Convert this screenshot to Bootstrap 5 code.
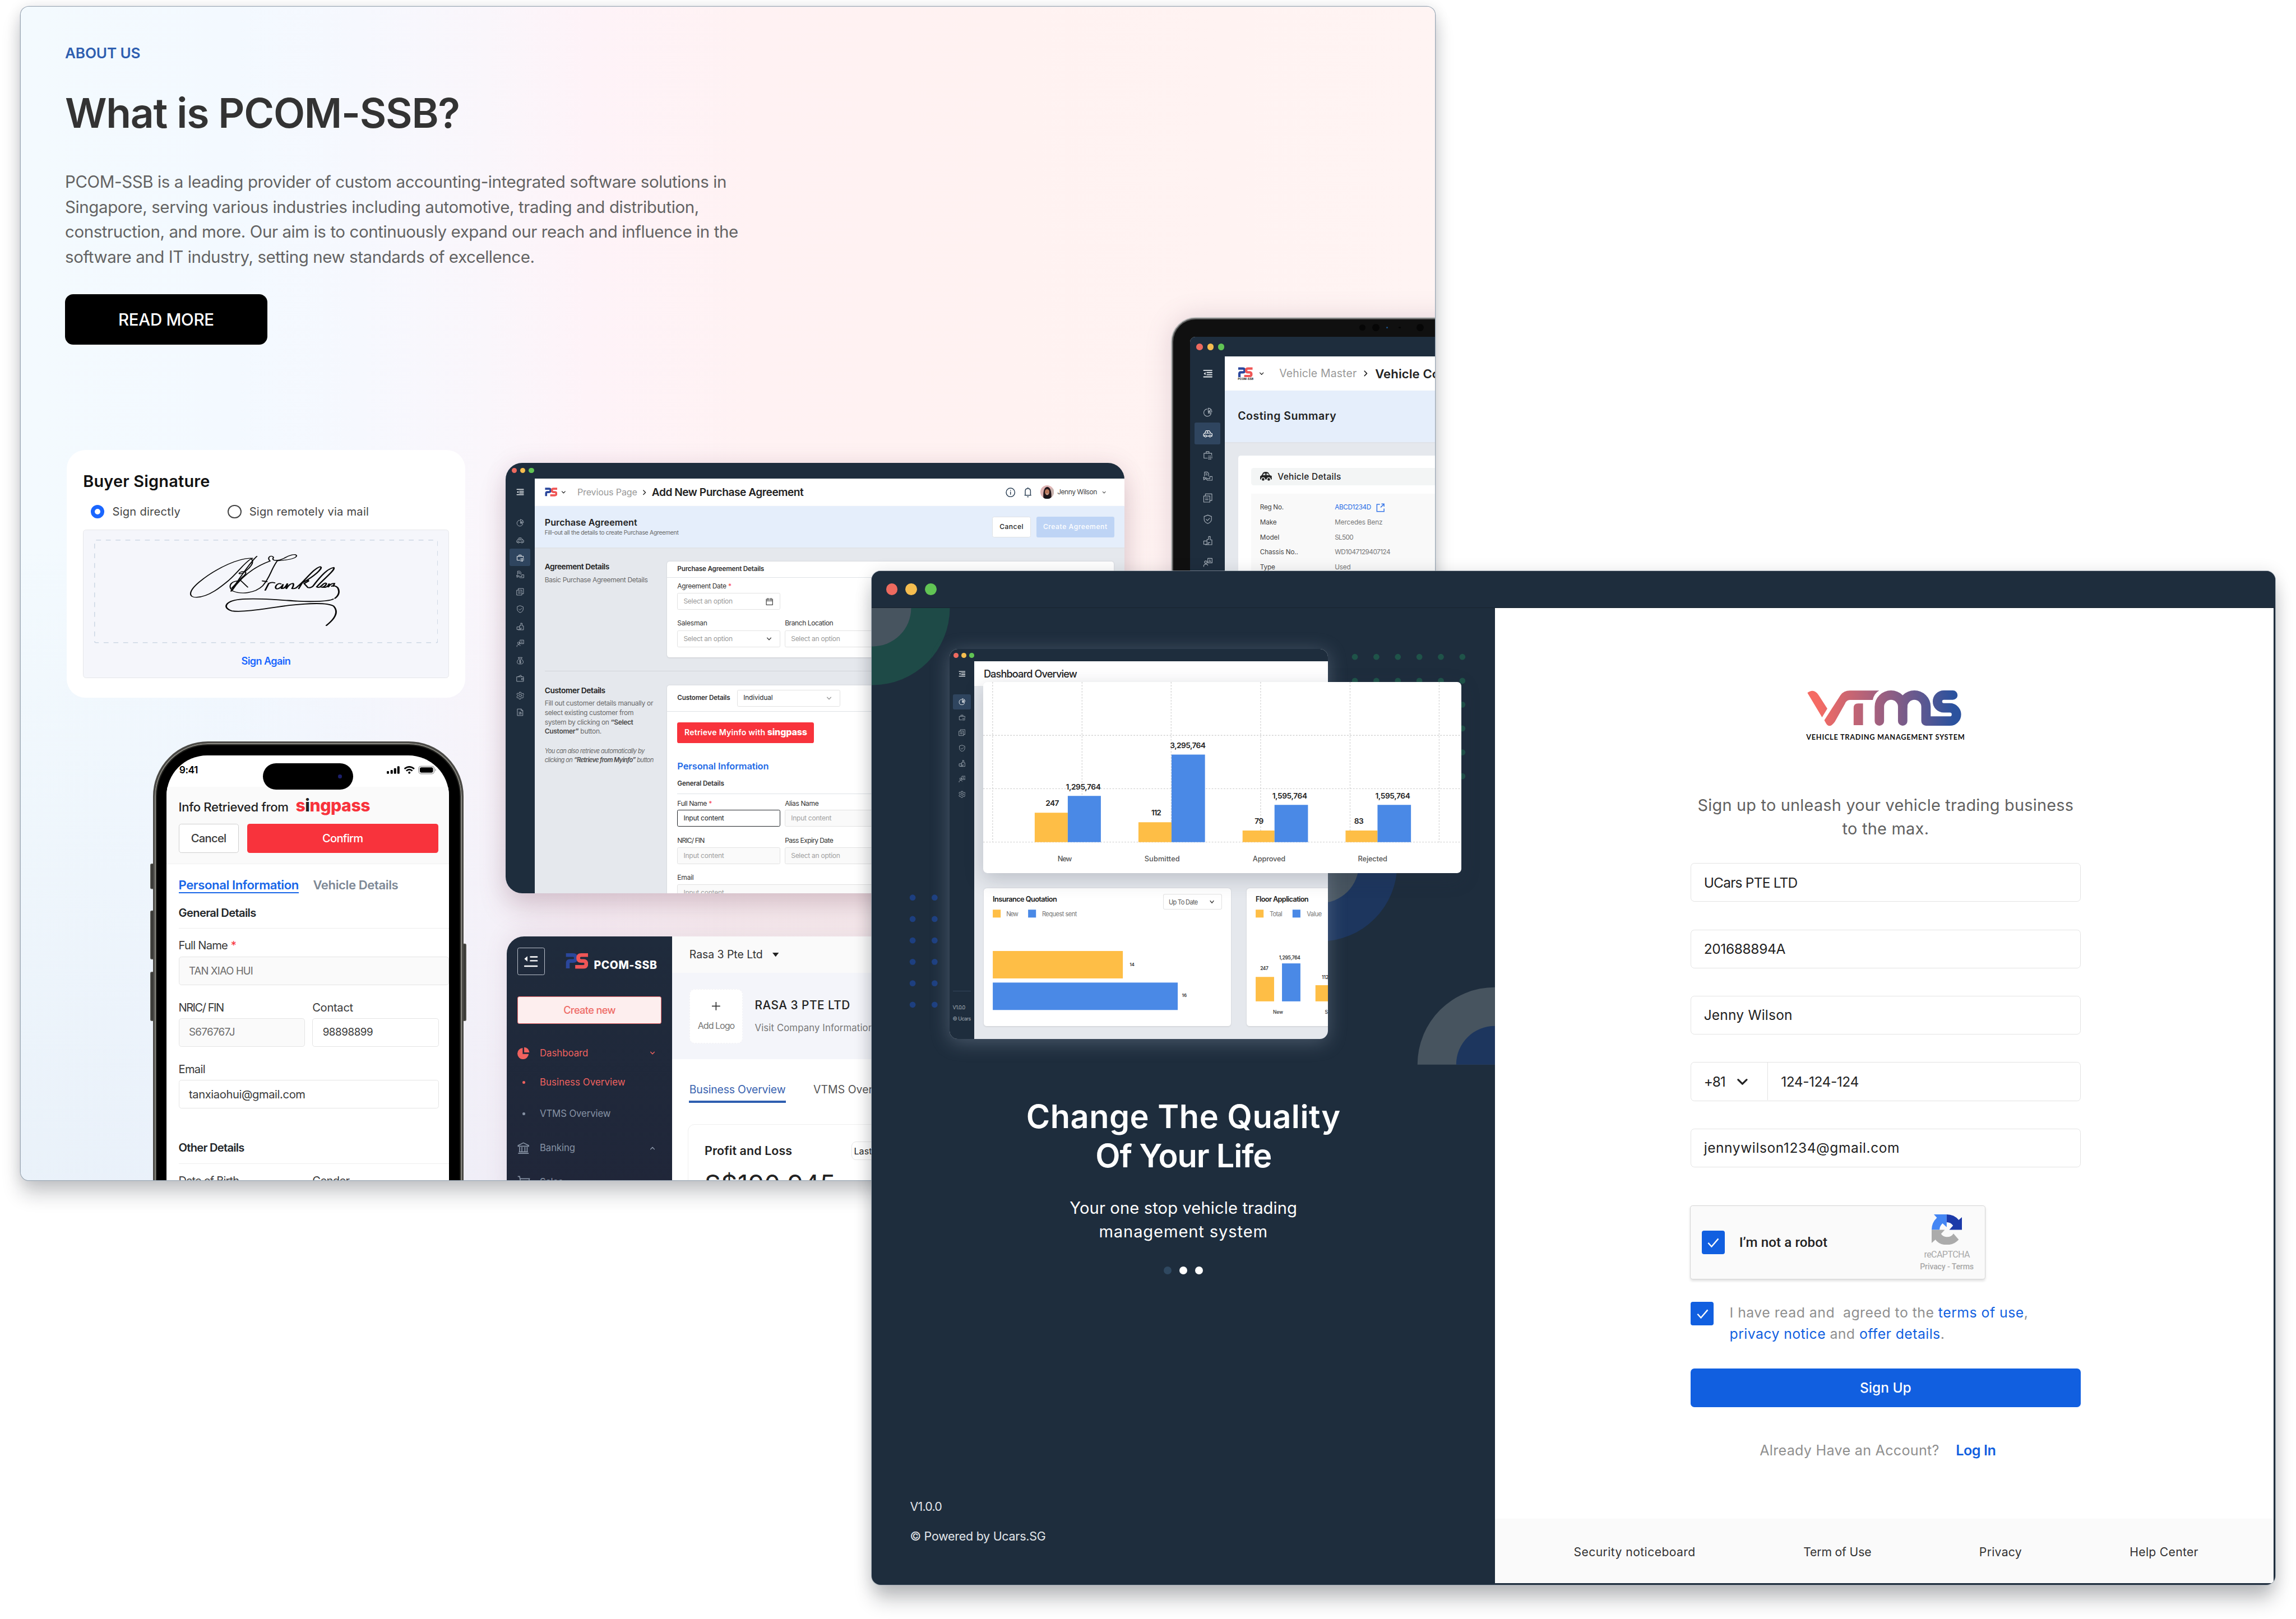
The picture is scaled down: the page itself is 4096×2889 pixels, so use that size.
<!DOCTYPE html>
<html lang="en">
<head>
<meta charset="utf-8">
<meta name="viewport" content="width=device-width, initial-scale=1">
<title>PCOM-SSB and VTMS</title>
<link href="https://cdn.jsdelivr.net/npm/bootstrap@5.3.0/dist/css/bootstrap.min.css" rel="stylesheet">
<style>
:root{--navy:#1e2d3d;--blue:#115fe0;--grey:#e5e8ed;--amber:#febe46;--sky:#4a89e6;--red:#f8333c}
html{font-size:41.5px}
body{background:#fff;overflow:hidden;font-family:Inter,"Noto Sans",sans-serif;line-height:1;color:#222}
/* artboard is authored at 6108 x 4308 and scaled down */
.stage{width:6108px;height:4308px;zoom:.6706;background:#fff}
.stage svg{display:block;flex:none}
.stage [data-w]{display:block;width:max-content;white-space:nowrap;flex:none}
.win{position:absolute;overflow:hidden}
.dot{border-radius:50%;flex:none;background:#ee6a5f}
.dot:nth-child(2){background:#f5bd4f}.dot:nth-child(3){background:#61c454}
.titlebar{background:var(--navy);flex:none}
.fw-5{font-weight:500}.fw-6{font-weight:600}
.req{color:var(--red)}
.c4{color:#444}.c6{color:#666}.c9{color:#999}
.ic{width:100%;height:100%;fill:none;stroke:currentColor;stroke-width:1.6;stroke-linecap:round;stroke-linejoin:round}
.side{background:var(--navy);color:#a4adb7;flex:none}
.side>div{display:flex;align-items:center;justify-content:center;margin-inline:auto;flex:none}
.side>div svg{width:var(--i);height:var(--i)}
.side .on{background:#2f455f;color:#fff;border-radius:4px}
.side .top{color:#e8ebee}

/* about page */
.about{left:55px;top:18px;width:3762px;height:3123px;border-radius:22px;background:linear-gradient(90deg,#f3fafe 0,#f3f9ff 15%,#f6f8fe 24%,#faf6fb 33%,#fef3f8 40%,#fff2f3 52%,#fff2f1 70%,#fff4f3 100%)}
.about-shadow{position:absolute;left:55px;top:18px;width:3762px;height:3123px;border-radius:22px;box-shadow:0 0 0 2px #9eabb8,0 36px 50px rgba(15,20,30,.2),0 4px 40px rgba(15,20,30,.12)}
.tint{position:absolute;inset:0;background:linear-gradient(180deg,rgba(120,140,190,0) 45%,rgba(110,130,190,.07) 100%)}
.hero{padding:104px 0 0 118px}
.hero .kick{height:40px;line-height:40px;font-size:39px;color:#2f5fb0}
.hero h1{height:120px;line-height:120px;font-size:109px;color:#333;margin:80px 0 88px}
.hero p{font-size:44px;line-height:66.8px;color:#636363;margin:0 0 66px}
.hero .btn{width:538px;height:134px;border-radius:22px;background:#000;color:#fff;font-size:44px}

.sig{left:122px;top:1180px;width:1061px;height:658px;border-radius:50px;background:#fff;padding:57px 44px 0}
.sig .ttl{height:50px;line-height:50px;font-size:43px;color:#111}
.sig .opts{height:36px;margin:38px 0 31px 21px;font-size:30px}
.radio{width:36px;height:36px;border-radius:50%;border:3px solid #444;margin-right:21px}
.radio.sel{border:11px solid #1a66ff}
.sig .opts [data-w="181"]{margin-right:126px}
.sig .pad{height:394px;background:#f5f6fb;border:2px solid #e6e7ea;border-radius:8px;padding-top:25px}
.sig .pad .again{height:94px;font-size:27px;color:#1a66ff}

.phone{left:344px;top:1955px;width:842px;height:1168px}
.phone .body{position:absolute;left:8px;top:0;width:826px;height:1400px;border-radius:146px;background:#000;border:5px solid #4b4a46;box-shadow:inset 0 0 0 3px #8b8a83,inset 0 0 0 6px #22221f}
.phone .screen{position:absolute;left:44px;top:37px;width:752px;height:1200px;border-radius:108px 108px 0 0;background:#fff;overflow:hidden;font-size:30px;color:#3a3a3a}
.phone .stat{height:83px;padding:0 32px 5px 34px}
.phone .head{height:207px;background:#fafafa;border-bottom:2px solid #f0f0f0;padding:30px 29px 0 32px}
.phone .head .r1{height:50px;font-size:33px;color:#222}
.sing{font-weight:800;color:var(--red)}.sing b{color:#222;font-weight:800}
.phone .head .sing{font-size:45px;margin:-9px 0 0 19px}
.phone .head .r2{margin-top:19px;gap:22px;height:78px}
.phone .head .r2 div{border-radius:7px;display:flex;align-items:center;justify-content:center}
.phone .head .cn{width:160px;border:2px solid #cfcfcf;background:#fff}
.phone .head .cf{flex:1;background:var(--red);color:#fff}
.phone .form{padding-left:32px;display:grid;align-items:center;grid-template-rows:109px 62px 74px 76px 89px 75px 89px 76px 148px 90px}
.phone .form>*{min-width:0}
.phone .tabs{font-size:33px;gap:38px}
.phone .tabs .act{color:#1766e8;border-bottom:3px solid #1766e8;padding:6px 0 3px}
.phone .tabs span+span{color:#7d8895}
.phone .rule{border-bottom:2px solid #eee;align-self:stretch;display:flex;align-items:flex-start}
.phone .gen{padding-top:5px}.phone .oth{padding-top:90px}
.phone .lab{padding-top:31px}
.phone .duo{display:grid;grid-template-columns:336px 336px;gap:20px;align-items:center}
.phone .inp{border:2px solid #e4e4e4;border-radius:7px;padding-left:26px;height:76px;display:flex;align-items:center}
.ro{background:#fafafa;color:#6d6d6d}
.island{position:absolute;left:256px;top:21px;width:240px;height:70px;border-radius:35px;background:#000;padding:30px 0 0 200px}
.island i{display:block;width:10px;height:10px;border-radius:50%;background:#1c1f6b}

.purch{left:1290px;top:1213px;width:1647px;height:1146px;border-radius:44px;background:var(--grey);z-index:2}
.soft{position:absolute;border-radius:44px}
.purch-sh{left:1290px;top:1213px;width:1647px;height:1146px;box-shadow:0 40px 70px rgba(120,70,90,.22),0 0 60px rgba(120,80,110,.1)}
.purch .titlebar{height:42px;padding-left:16px;gap:9px}.purch .titlebar .dot{width:14px;height:14px}
.purch .side{width:77px;--i:21px;padding-top:14px}.purch .side>div{width:55px;height:45.85px}.purch .side .top{margin-bottom:36px}
.purch .hd{height:74px;background:#fff;padding:0 49px 0 27px;font-size:24px}
.purch .hd .ttl{font-size:28.5px}
.purch .hd .who{font-size:18px}
.purch .band{height:110px;background:#e5eefb;padding:0 28px 0 27px;box-shadow:0 2px 5px rgba(0,0,0,.08)}
.bnd{border-radius:5px;height:55px;display:flex;align-items:center;justify-content:center;font-size:18px}
.purch .blk{display:grid;grid-template-columns:326px 1188px;margin-left:27px}
.purch .crd{background:#fff;border-radius:7px;box-shadow:0 1px 4px rgba(0,0,0,.12);font-size:18px;color:#333}
.purch .crd>div{padding-left:27px}
.purch .cols{display:grid;grid-template-columns:274px 274px;column-gap:12px;align-items:center}
.purch .inp{border:1.5px solid #e2e2e2;border-radius:4px;padding:0 18px 0 15px;height:45px;display:flex;align-items:center;justify-content:space-between;color:#999}
.purch h6{font-size:20.5px;line-height:28px;font-weight:600;margin:0}
.purch .ro{color:#a0a0a0}
.purch .copy{font-size:18px;line-height:25.1px;color:#6a6a6a}.purch .copy b{font-weight:600;color:#4a4a4a}
.purch .copy.fst-italic{font-size:16.5px}
.lbl2{height:54px;padding-top:18px}
.sm{width:20px;height:20px}
.ch-s{width:15px;height:15px;margin-right:3px}

.pcom{left:1293px;top:2474px;width:1200px;height:700px;border-radius:46px 0 0 0;background:#fff;z-index:2;box-shadow:0 -10px 60px rgba(120,80,110,.12)}
.pcom .nav-l{width:440px;height:700px;background:linear-gradient(#1f2b3c,#202639);padding:29px 28px 0;flex:none}
.pcom .brand{height:73px}
.pcom .brand .bx{width:73px;height:73px;border:2px solid #b9bfca;border-radius:5px;color:#fff;padding:16px}
.pcom .brand .nm{font-size:29px;font-weight:800;color:#fff;margin:33px 0 0 15px}
.pcom .mk{height:73px;margin:57px 0 37px;border:2px solid #f0696b;background:#fdeeee;border-radius:5px;color:#ee6b66;font-size:27px;display:flex;align-items:center;justify-content:center}
.pcom .it{display:grid;grid-template-columns:36px 1fr 20px;column-gap:24px;align-items:center;height:82px;font-size:25px;color:#8793a5;padding-right:12px}
.pcom .it.hot{color:#f0625f}
.pcom .bul{width:7px;height:7px;border-radius:50%;background:currentColor;margin:auto}
.pcom .co{height:97px;background:#fafafa;padding-left:46px;font-size:29px;gap:26px;color:#333}
.pcom .cb{height:230px;background:#f4f5fa;padding-left:46px;gap:32px}
.pcom .lg{width:142px;height:144px;background:#fff;border-radius:14px;border:2px dashed #f3f3f6;font-size:24px;color:#777;gap:28px}
.pcom .tb{height:172px;padding:0 0 10px 44px;gap:73px;font-size:29px;color:#555}
.pcom .tb .act{color:#3a63b0;border-bottom:6px solid #2f5fb0;padding:20px 1px 14px 2px}
.pcom .pl{margin-left:42px;height:300px;border:2px solid #eee;border-radius:18px;padding:41px 0 0 43px}
.pcom .pl .r{height:58px;font-size:32px}
.pcom .pl .r span+span{border:2px solid #e6e6e6;border-radius:12px;font-size:24px;padding:11px 6px;margin-left:157px}
.pcom .pl .amt{font-size:67px;line-height:66px;margin-top:27px;color:#222}

.tab{left:3060px;top:826px;width:1000px;height:1300px;border-radius:66px;background:#101010;border:4px solid #b9b9b9;box-shadow:inset 0 0 0 3px #5a5a5a,0 0 70px rgba(120,80,110,.2)}
.tab .lens{height:50px;padding-left:498px;gap:18px}
.tab .lens i{border-radius:50%;background:#060606;width:20px;height:20px}
.tab .view{margin-left:48px;height:1200px;border-radius:14px 0 0 0;overflow:hidden;background:var(--grey)}
.tab .titlebar{height:52px;padding-left:17px;gap:11px}.tab .titlebar .dot{width:17.5px;height:17.5px}
.tab .side{width:93px;height:1100px;--i:26px;padding-top:17px}.tab .side>div{width:68px;height:57.1px}.tab .side .top{margin-bottom:45px}
.tab .hd{height:91px;background:#fff;padding-left:34px;font-size:29px}
.tab .band{height:136px;background:#e5eefb;padding-left:34px;font-size:29px;box-shadow:0 2px 5px rgba(0,0,0,.08)}
.tab .crd{background:#fff;margin:36px 0 0 35px;padding:34px 0 0 34px;height:700px;border-radius:7px}
.tab .sub{height:45px;background:#f3f5f5;border-radius:7px;padding-left:24px;font-size:23px;gap:16px;color:#222}
.tab .kv{background:#f9f9f9;margin-top:23px;padding:17px 0 0 24px;font-size:17.5px;height:600px}
.tab .kv div{display:grid;grid-template-columns:199px 110px 30px;height:40px;align-items:center;color:#777}
.tab .kv div>:first-child{color:#444}

/* sign-up window */
.vtms{left:2319px;top:1520px;width:3734px;height:2697px;border-radius:24px;background:var(--navy);box-shadow:0 0 0 1.5px rgba(150,160,172,.7),0 44px 52px -6px rgba(15,20,30,.24),0 6px 46px rgba(15,20,30,.14);z-index:5}
.vtms>.titlebar{height:98px;padding-left:38px;gap:21px;border-bottom:2px solid #17222e}
.vtms>.titlebar .dot{width:31px;height:31px}
.vtms .lft{width:1658.5px;height:2599px;flex:none}
.deco{position:absolute;left:0;top:98px}
.vtms .rgt{width:2071.5px;height:2595px;background:#fff}
.prev{margin:109px 0 0 207px;width:1006px;height:1038px;border-radius:22px;background:var(--grey);overflow:hidden;box-shadow:0 8px 50px rgba(190,205,225,.28);position:relative}
.prev .titlebar{height:33px;padding-left:11px;gap:8px}.prev .titlebar .dot{width:13px;height:13px}
.prev .side{width:66px;height:1005px;--i:19px;padding-top:13px;font-size:13.5px}.prev .side>div{width:49px;height:41.1px}.prev .side .top{margin-bottom:33px}
.prev .side .gapline{height:503px;border-bottom:1px solid #33465a}
.prev .side .vers{height:105px;align-items:flex-start;line-height:31px;padding-top:28px;justify-content:flex-start}
.prev .hd{height:66px;background:#fff;padding-left:25px;font-size:27px;width:940px}
.prev .low{padding:537px 0 0 25px;gap:42px}
.prev .cd{background:#fff;border-radius:8px;height:368px;box-shadow:0 1px 4px rgba(0,0,0,.12);flex:none}
.chart{position:absolute;left:297px;top:197px;width:1272px;height:509px;background:#fff;border-radius:11px;box-shadow:0 14px 50px rgba(40,50,70,.22)}
.tag{color:#fff;text-align:center}
.tag h2{font-size:86px;line-height:104px;font-weight:600;margin:155px 0 0}
.tag p{font-size:43.5px;line-height:63px;margin:56px 0 0}
.tag [data-w]{margin-inline:auto}
.pips{gap:21px;margin-top:60px}.pips i{width:21px;height:21px;border-radius:50%;background:#fff}.pips i:first-child{background:#2f4860}
.ver{font-size:32px;color:#e2e6ea;margin:579px 0 0 102px;line-height:78px}
.frm{width:1038px;margin:0 auto;position:relative;left:3px}
.frm .slogan{font:700 19px Lato,sans-serif;margin-top:16px;color:#111}
.frm .intro{font-size:43px;line-height:62.5px;color:#616161;margin:139px 0 60px}
.frm .form-control{height:103px;border:2.5px solid #e3e3e3;border-radius:10px;padding:0 34px;font-size:36.5px;color:#222;display:flex;align-items:center;margin-bottom:73.6px;background:#fff;line-height:1}
.frm .form-control .ic{width:34px;height:34px;margin:0 49px 0 29px}
.frm .num{border-left:2.500px solid #e3e3e3;height:100px;padding-left:35px}
.cap{width:787px;height:196px;border:2px solid #d6d6d6;border-radius:7px;background:#fafafa;box-shadow:0 3px 6px rgba(0,0,0,.12);margin:102px 0 60px -2px;padding:0 30px;font-family:Roboto,sans-serif}
.cap .rob{font-size:36px;margin-left:38px;color:#222}
.cap .rc{color:#a9a9a9;width:143px}
.cap .rc div+div{font-size:21px;margin-top:9px}.cap .rc svg+div{font-size:24px;margin-top:15px}
.ck{width:62px;height:62px;border-radius:6px;background:var(--blue);padding:13px;flex:none}
.agree{font-size:37px;line-height:57px;color:#8f8f8f;gap:42px}
.agree a,.lg-in{color:var(--blue);text-decoration:none}
.frm .btn{width:1038px;height:104px;border-radius:10px;background:var(--blue);color:#fff;font-size:36.5px;font-weight:500;margin-top:63px}
.have{font-size:37.5px;color:#8f8f8f;gap:44px;margin:96px 0 0 184px}
.foot{height:172px;background:#fafafa;padding:6px 0 0 209px;gap:287px;font-size:31.5px;color:#333}
</style>
</head>
<body>
<svg width="0" height="0" class="position-absolute" aria-hidden="true">
<defs>
<symbol id="menu" viewBox="0 0 24 24"><path d="M2 4h20M10 9.3h12M10 14.700h12M2 20h20" stroke-width="2.6"/><path d="M6.500 8v8L2 12z" fill="currentColor" stroke="none"/></symbol>
<symbol id="pie" viewBox="0 0 24 24"><path d="M10 4a9 9 0 1 0 10 10h-7l5-6"/><path d="M13 2v9l7-6a9 9 0 0 0-7-3zM20 5a9 9 0 0 1 2 6h-9"/></symbol>
<symbol id="car" viewBox="0 0 24 24"><path d="M4 18H1.500v-5l3-2 3-6h8l4 6 3 1v6H20M9 18h6M4.500 11h15M11.500 5v6"/><circle cx="6.500" cy="18" r="2.500"/><circle cx="17.500" cy="18" r="2.500"/></symbol>
<symbol id="case" viewBox="0 0 24 24"><path d="M11 20H2.500V8h19v4M8 8V4h7v4"/><path d="M14 15h1.500M18 15h1.500M22 15h.5M14 19h1.500M18 19h1.500M22 19h.5M14 22.500h1.500M18 22.500h1.500" stroke-width="2"/></symbol>
<symbol id="hand" viewBox="0 0 24 24"><path d="M4 12V2h7l3 3v7M7 6h3M7 9h4M2 14v7l5-3 4 4h12v-9h-6v5M1 16h7l3 2h6"/></symbol>
<symbol id="copy" viewBox="0 0 24 24"><path d="M2 7h15v15H2zM6 7V2h16v16h-5M6 12h7M6 16h7"/></symbol>
<symbol id="shield" viewBox="0 0 24 24"><path d="M12 1.500l9 3.500v7c0 5-4 8.500-9 10.500C7 20.500 3 17 3 12V5zM8 12l3 3 5.500-5.500"/></symbol>
<symbol id="thumb" viewBox="0 0 24 24"><path d="M14 2h4v8h4v12h-9v-5h4M14 2v7h-4v4H2v8h8v-5M10 13v3M13 22H6"/></symbol>
<symbol id="people" viewBox="0 0 24 24"><circle cx="7" cy="11" r="3"/><path d="M2 22v-3l3-3h5l2 3M12 2h10.500v11H12zM15 10c0-2 4-2 4 0M17 5v2"/></symbol>
<symbol id="bag" viewBox="0 0 24 24"><path d="M8 6L6 2h12l-2 4zM8 7c-4 3-6 7-5 11 1 3 3 4 9 4s8-1 9-4c1-4-1-8-5-11M14 11h-4v3.500h4V18h-4M12 9.500V20"/></symbol>
<symbol id="wallet" viewBox="0 0 24 24"><path d="M2 8h20v14H2zM5 8l9-5 3 5M22 13h-6v4h6"/></symbol>
<symbol id="gear" viewBox="0 0 24 24"><path d="M10 2h4l1 3 3 1.500 3-1 2 3.500-2.500 2.500v3L22 16l-2 3.500-3-1-3 1.500-1 3H9l-1-3-2-1.500-3 1L1.500 16 4 13.500v-3L1.500 8 3.500 5l3 1L9 5z"/><circle cx="12" cy="12" r="4"/></symbol>
<symbol id="file" viewBox="0 0 24 24"><path d="M4 2h11l5 5v15H4zM15 2v5h5M8 12h6l3 3M8 17h8M13 12l-2 5"/></symbol>
<symbol id="chev" viewBox="0 0 24 24"><path d="M4 8l8 8 8-8" stroke-width="3.400"/></symbol>
<symbol id="next" viewBox="0 0 24 24"><path d="M8 4l8 8-8 8" stroke-width="3"/></symbol>
<symbol id="cal" viewBox="0 0 24 24"><path d="M2 4h20v18H2zM2 9h20M7 1v5M17 1v5" stroke-width="2.200"/></symbol>
<symbol id="check" viewBox="0 0 36 36"><path d="M5 19l9 10L32 8" stroke-width="3.600" fill="none" stroke="#fff"/></symbol>
<symbol id="ps" viewBox="0 0 62 44"><g fill="none" stroke-width="10"><path stroke="#2b479c" d="M1 6h19q8 0 8 8t-8 8h-8q-6 0-6 6v14"/><path stroke="#ef5656" d="M61 6H42q-8 0-8 8t8 8h6q8 0 8 8t-8 8H26"/></g></symbol>
</defs>
</svg>

<main class="stage position-relative overflow-hidden">
<div class="about-shadow"></div>
<section class="win about">
  <div class="tint"></div>
  <div class="hero position-relative">
    <div class="kick fw-6"><span data-w="200">ABOUT US</span></div>
    <h1 class="fw-6"><span data-w="1050">What is PCOM-SSB?</span></h1>
    <p><span data-w="1760">PCOM-SSB is a leading provider of custom accounting-integrated software solutions in</span><span data-w="1686">Singapore, serving various industries including automotive, trading and distribution,</span><span data-w="1791">construction, and more. Our aim is to continuously expand our reach and influence in the</span><span data-w="1249">software and IT industry, setting new standards of excellence.</span></p>
    <a class="btn d-flex align-items-center justify-content-center fw-5 border-0"><span data-w="255">READ MORE</span></a>
  </div>

  <div class="win sig">
    <div class="ttl fw-6"><span data-w="338">Buyer Signature</span></div>
    <div class="opts d-flex align-items-center c4"><span class="radio sel"></span><span data-w="181">Sign directly</span><span class="radio"></span><span data-w="318">Sign remotely via mail</span></div>
    <div class="pad">
      <svg width="915" height="275" class="mx-auto" fill="none">
        <rect x="1" y="1" width="913" height="273" rx="4" stroke="#cdd7e4" stroke-width="2.500" stroke-dasharray="13 13"/>
        <svg x="248" y="34" width="414" height="201" viewBox="490 655 580 450" preserveAspectRatio="none" stroke="#0a0a0a" stroke-linecap="round">
          <g stroke-width="4.500">
          <path d="M749 678C730 705 700 770 652 886M733 690C690 682 600 745 535 830C490 890 495 925 525 922C570 920 615 860 645 820C680 770 700 720 728 692"/>
          <path d="M728 692C742 715 725 745 700 775C680 790 678 778 692 770C712 764 712 780 696 800L655 868M686 818L715 862"/>
          <path d="M655 885C690 800 740 740 798 706C785 685 802 666 811 684C800 710 830 705 850 690C870 670 895 660 897 675C895 695 850 702 825 705C800 760 800 800 770 855C740 900 690 905 660 885C640 860 650 830 675 825"/>
          <path d="M770 825l16 4M780 880l13-40q10-10 22-4M838 842c-16-8-26 28-14 30c10 0 20-18 23-28l-6 26q8 0 14-10l8-20l-5 32q14-34 26-32q4 8-4 30q12 4 22-14C925 830 960 750 985 740C1000 745 960 800 918 836L905 870M925 830q18-16 16-4l-16 14l14 24q10 5 20-10C975 820 1010 750 1035 745C1045 755 1000 810 972 860q8 10 20-10q12-18 16-10q-2 18-16 22q14 4 22-8l5-14l-5 22q12-26 24-22l-4 16" stroke-width="6"/>
          <path d="M1028 856C1034 850 1044 855 1050 865C1060 890 1052 915 1040 928M1033 933C1020 945 960 950 900 945C830 938 740 925 685 935C630 945 620 985 655 1003C700 1015 800 985 870 970C930 960 1010 950 1035 975C1055 1010 1040 1050 1008 1090" stroke-width="6"/></g>
        </svg>
      </svg>
      <div class="again d-flex align-items-center justify-content-center fw-6"><span data-w="131">Sign Again</span></div>
    </div>
  </div>

  <div class="win phone">
    <svg class="position-absolute top-0 start-0" width="842" height="1168" fill="#3b3b38" stroke="#5c5b55" stroke-width="2"><rect x="1" y="326" width="12" height="66" rx="3"/><rect x="1" y="451" width="12" height="128" rx="3"/><rect x="1" y="614" width="12" height="129" rx="3"/><rect x="828" y="539" width="12" height="204" rx="3"/></svg>
    <div class="body"></div>
    <div class="screen">
      <div class="stat d-flex align-items-center justify-content-between fw-6 text-black">
        <span style="font-size:26px" data-w="49">9:41</span>
        <svg width="134" height="24" fill="#000"><rect x="0" y="15" width="6" height="7" rx="2"/><rect x="10" y="12" width="6" height="10" rx="2"/><rect x="19" y="7" width="6" height="15" rx="2"/><rect x="28" y="2" width="6" height="20" rx="2"/><g fill="none" stroke="#000" stroke-width="4"><path d="M47 9q13-11 26 0M52 14q8-7 16 0"/></g><circle cx="60" cy="19" r="3"/><rect x="85" y="2" width="41" height="20" rx="6" fill="none" stroke="#999" stroke-width="2"/><rect x="88" y="5" width="35" height="14" rx="4"/><path d="M129 8q4 4 0 8z" fill="#999"/></svg>
      </div>
      <div class="island"><i></i></div>
      <div class="head">
        <div class="r1 d-flex align-items-center"><span class="fw-5" data-w="293">Info Retrieved from</span><span class="sing" data-w="198">s<b>i</b>ngpass</span></div>
        <div class="r2 d-flex fw-5"><div class="cn"><span data-w="94">Cancel</span></div><div class="cf"><span data-w="108">Confirm</span></div></div>
      </div>
      <div class="form">
        <div class="tabs d-flex align-items-center fw-6"><span class="act" data-w="320">Personal Information</span><span data-w="226">Vehicle Details</span></div>
        <div class="rule gen fw-6 text-dark"><span data-w="206">General Details</span></div>
        <div class="d-flex" style="padding-top:17px"><span data-w="131">Full Name</span>&nbsp;<span class="req">*</span></div>
        <div class="inp ro" style="font-size:27.5px"><span data-w="170">TAN XIAO HUI</span></div>
        <div class="duo lab"><span data-w="119">NRIC/ FIN</span><span data-w="108">Contact</span></div>
        <div class="duo" style="font-size:28px"><div class="inp ro"><span data-w="122">S676767J</span></div><div class="inp"><span data-w="134">98898899</span></div></div>
        <div class="lab"><span data-w="71">Email</span></div>
        <div class="inp" style="width:692px"><span data-w="310">tanxiaohui@gmail.com</span></div>
        <div class="rule oth fw-6 text-dark"><span data-w="175">Other Details</span></div>
        <div class="duo"><span data-w="161">Date of Birth</span><span data-w="99">Gender</span></div>
      </div>
    </div>
  </div>

  <div class="soft purch-sh"></div>
  <div class="win purch">
    <div class="titlebar d-flex align-items-center"><i class="dot"></i><i class="dot"></i><i class="dot"></i></div>
    <div class="d-flex">
      <nav class="side" data-icons="menu pie car case hand copy shield thumb people bag wallet gear file" data-on="case"></nav>
      <div class="flex-grow-1">
        <div class="hd d-flex align-items-center">
          <div><svg width="34" height="24"><use href="#ps"/></svg></div>
          <svg class="ic" style="width:13px;height:13px;margin:0 30px 0 10px"><use href="#chev"/></svg>
          <span class="c9" data-w="159">Previous Page</span>
          <svg class="ic sm" style="width:17px;height:17px;margin:0 11px"><use href="#next"/></svg>
          <span class="fw-6 ttl" data-w="403">Add New Purchase Agreement</span>
          <div class="who ms-auto d-flex align-items-center c4">
            <svg width="26" height="26" viewBox="0 0 26 26" fill="none" stroke="#2d4156" stroke-width="2.200"><circle cx="13" cy="13" r="11.500"/><path d="M13 11v8M13 6.500v2"/></svg>
            <svg width="20" height="28" viewBox="0 0 20 28" fill="none" stroke="#2d4156" stroke-width="2.200" style="margin-inline:23px"><path d="M3 22V11q0-7 7-7t7 7v11M1 22h18M10 1v3M8 26h4"/></svg>
            <svg width="36" height="36" viewBox="0 0 36 36"><defs><clipPath id="av"><circle cx="18" cy="18" r="18"/></clipPath></defs><g clip-path="url(#av)"><path fill="#dfb4b4" d="M0 0h36v36H0z"/><path fill="#c9b3ae" d="M28 8h8v28h-8z"/><path fill="#21161a" d="M8 36Q6 6 18 4q13 1 11 32z"/><ellipse cx="18" cy="18" rx="6" ry="8" fill="#b9775b"/><path d="M15 22q3 3 6 0" stroke="#fff" stroke-width="1.500"/><path fill="#15141a" d="M9 36q2-8 9-8t10 8z"/></g></svg>
            <span style="margin-left:9px" data-w="105">Jenny Wilson</span>
            <svg class="ic" style="width:11px;height:11px;margin-left:14px"><use href="#chev"/></svg>
          </div>
        </div>
        <div class="band d-flex align-items-center justify-content-between position-relative">
          <div><div class="fw-6" style="font-size:24px" data-w="246">Purchase Agreement</div><div class="c6" style="font-size:15.500px;margin-top:8px" data-w="356">Fill-out all the details to create Purchase Agreement</div></div>
          <div class="d-flex fw-5" style="gap:14px"><div class="bnd bg-white border" style="width:104px"><span data-w="64">Cancel</span></div><div class="bnd text-white" style="width:207px;background:#bed4f5"><span data-w="171">Create Agreement</span></div></div>
        </div>
        <div class="blk" style="margin-top:37px">
          <div><h6><span data-w="172">Agreement Details</span></h6><div class="copy" style="margin-top:9px"><span data-w="274">Basic Purchase Agreement Details</span></div></div>
          <div class="crd">
            <div class="d-flex align-items-center fw-6 border-bottom" style="height:44px;font-size:17.500px"><span data-w="231">Purchase Agreement Details</span></div>
            <div class="d-flex align-items-center" style="height:40px;padding-top:5px"><span data-w="130">Agreement Date</span><span class="req">&nbsp;*</span></div>
            <div class="cols"><div class="inp"><span data-w="130">Select an option</span><svg class="ic c4 sm"><use href="#cal"/></svg></div></div>
            <div class="cols lbl2"><span data-w="79">Salesman</span><span data-w="128">Branch Location</span></div>
            <div class="cols"><div class="inp"><span data-w="130">Select an option</span><svg class="ic c4 ch-s"><use href="#chev"/></svg></div><div class="inp"><span data-w="130">Select an option</span></div></div>
            <div style="height:27px"></div>
          </div>
        </div>
        <div style="margin:36px 28px 37px 27px;border-top:2px solid #d3d6db"></div>
        <div class="blk">
          <div><h6><span data-w="161">Customer Details</span></h6>
            <div class="copy" style="margin-top:8px"><span data-w="289">Fill out customer details manually or</span><span data-w="236">select existing customer from</span><span data-w="235">system by clicking on <b>“Select</b></span><span data-w="151"><b>Customer”</b> button.</span></div>
            <div class="copy fst-italic" style="margin-top:26px"><span data-w="265">You can also retrieve automatically by</span><span data-w="289">clicking on <b>“Retrieve from Myinfo”</b> button</span></div></div>
          <div class="crd" style="height:700px">
            <div class="d-flex align-items-center fw-6 border-bottom" style="height:71px;gap:19px;font-size:17.500px"><span data-w="140">Customer Details</span><div class="inp fw-normal c4" style="width:274px"><span class="text-dark" data-w="78">Individual</span><svg class="ic ch-s"><use href="#chev"/></svg></div></div>
            <div style="margin:28px 0 44px"><div class="bnd text-white fw-6" style="width:364px;background:var(--red);gap:5px;font-size:21px"><span data-w="215">Retrieve Myinfo with</span><span style="font-weight:800;font-size:24px;margin-top:-5px" data-w="106">singpass</span></div></div>
            <div class="fw-6 d-flex align-items-center" style="height:35px;font-size:24.500px;color:#1f6ae6"><span data-w="243">Personal Information</span></div>
            <div class="fw-6 d-flex align-items-center" style="height:55px;padding-top:5px;font-size:17.500px"><span data-w="124">General Details</span></div>
            <div class="cols border-top" style="height:44px;padding-top:10px;margin-left:27px;padding-left:0"><span><span class="d-inline-block" data-w="78">Full Name</span><span class="req">&nbsp;*</span></span><span data-w="90">Alias Name</span></div>
            <div class="cols"><div class="inp text-dark border-dark"><span data-w="107">Input content</span></div><div class="inp ro"><span data-w="107">Input content</span></div></div>
            <div class="cols lbl2"><span data-w="72">NRIC/ FIN</span><span data-w="128">Pass Expiry Date</span></div>
            <div class="cols"><div class="inp ro"><span data-w="107">Input content</span></div><div class="inp ro"><span data-w="130">Select an option</span></div></div>
            <div class="cols lbl2"><span data-w="43">Email</span></div>
            <div class="cols"><div class="inp ro" style="width:560px"><span data-w="107">Input content</span></div></div>
          </div>
        </div>
      </div>
    </div>
  </div>

  <div class="win pcom d-flex">
    <nav class="nav-l">
      <div class="brand d-flex"><div class="bx"><svg class="ic" viewBox="0 0 37 37" stroke-width="3.500"><path d="M18 8h17M18 18h17M3 32h32" stroke-width="3.500"/><path d="M10 6v14l-8-7z" fill="#fff" stroke="none"/></svg></div>
        <svg width="61" height="44" style="margin:14px 0 0 55px"><use href="#ps"/></svg><div class="nm"><span data-w="168">PCOM-SSB</span></div></div>
      <div class="mk fw-5"><span data-w="138">Create new</span></div>
      <div class="it hot"><svg width="34" height="34" viewBox="0 0 34 34" fill="currentColor"><path d="M14 3v16h16A15 15 0 1 1 14 3z"/><path d="M18 1a15 15 0 0 1 14 14H18z"/></svg><span data-w="129">Dashboard</span><svg class="ic" style="width:15px;height:15px"><use href="#chev"/></svg></div>
      <div class="it hot" style="height:75px"><i class="bul"></i><span data-w="228">Business Overview</span></div>
      <div class="it" style="height:91px"><i class="bul"></i><span data-w="189">VTMS Overview</span></div>
      <div class="it" style="height:92px"><svg width="32" height="32" viewBox="0 0 32 32" fill="none" stroke="currentColor" stroke-width="2.500"><path d="M2 11v-2l14-7 14 7v2zM6 13v13M12 13v13M20 13v13M26 13v13M2 30h28M4 26h24"/></svg><span data-w="94">Banking</span><svg class="ic" style="width:15px;height:15px;transform:rotate(180deg)"><use href="#chev"/></svg></div>
      <div class="it" style="height:88px"><svg width="34" height="32" viewBox="0 0 34 32" fill="none" stroke="currentColor" stroke-width="2.500"><path d="M1 2h5l3 18h20l3-12H8"/></svg><span data-w="62">Sales</span></div>
    </nav>
    <div class="flex-grow-1">
      <div class="co d-flex align-items-center"><span data-w="195">Rasa 3 Pte Ltd</span><svg width="17" height="11"><path d="M0 0h17L8.500 11z" fill="#222"/></svg></div>
      <div class="cb d-flex align-items-center">
        <div class="lg d-flex flex-column align-items-center justify-content-center"><svg width="22" height="22"><path d="M11 0v22M0 11h22" stroke="#333" stroke-width="2.500"/></svg><span data-w="98">Add Logo</span></div>
        <div><div class="fw-5" style="font-size:31px" data-w="254">RASA 3 PTE LTD</div><div style="font-size:25px;color:#777;margin-top:32px" data-w="316">Visit Company Information</div></div>
      </div>
      <div class="tb d-flex align-items-center"><span class="act" data-w="259">Business Overview</span><span data-w="222">VTMS Overview</span></div>
      <div class="pl"><div class="r d-flex align-items-center"><span class="fw-6" data-w="233">Profit and Loss</span><span>Last month</span></div><div class="amt"><span data-w="349">S$190,945</span></div></div>
    </div>
  </div>

  <div class="win tab">
    <div class="lens d-flex align-items-center"><i style="width:16px;height:16px"></i><i></i><i style="width:5px;height:5px;background:#1c5188"></i><i style="width:5px;height:5px;margin:0 24px 0 10px"></i><i></i></div>
    <div class="view">
      <div class="titlebar d-flex align-items-center"><i class="dot"></i><i class="dot"></i><i class="dot"></i></div>
      <div class="d-flex">
        <nav class="side" data-icons="menu pie car case hand copy shield thumb people" data-on="car"></nav>
        <div class="flex-grow-1">
          <div class="hd d-flex align-items-center"><div><svg width="41" height="28"><use href="#ps"/></svg><div class="fw-bold" style="font-size:7.500px;color:#222;margin-top:1px" data-w="41">PCOM-SSB</div></div>
            <svg class="ic" style="width:14px;height:14px;margin:0 40px 0 15px"><use href="#chev"/></svg><span class="c9" data-w="206">Vehicle Master</span><svg class="ic" style="width:19px;height:19px;margin:0 15px"><use href="#next"/></svg><span class="fw-6" style="font-size:33px" data-w="252">Vehicle Costing</span></div>
          <div class="band d-flex align-items-center fw-6"><span data-w="262">Costing Summary</span></div>
          <div class="crd">
            <div class="sub d-flex align-items-center fw-5"><svg width="31" height="25" viewBox="0 0 31 25"><path d="M0 20v-8l4-3 4-7q7-4 14 0l4 7 5 2v9z" fill="#222"/><path d="M7 9l3-5h4v5zM17 4h4l3 5h-7z" fill="#cfd3d3"/><g fill="#222" stroke="#f3f5f5" stroke-width="2"><circle cx="8" cy="20" r="4.500"/><circle cx="23" cy="20" r="4.500"/></g></svg><span data-w="169">Vehicle Details</span></div>
            <div class="kv">
              <div><span data-w="62">Reg No.</span><span style="color:#1f6ae6" data-w="96">ABCD1234D</span><svg width="23" height="24" fill="none" stroke="#3a78e8" stroke-width="2.300"><path d="M10 3H2v19h19v-8M14 2h7v7M21 2L12 11"/></svg></div>
              <div><span data-w="44">Make</span><span data-w="127">Mercedes Benz</span></div>
              <div><span data-w="51">Model</span><span data-w="49">SL500</span></div>
              <div><span data-w="101">Chassis No..</span><span data-w="147">WD1047129407124</span></div>
              <div><span data-w="40">Type</span><span data-w="42">Used</span></div>
            </div>
          </div>
        </div>
      </div>
    </div>
  </div>
</section>

<section class="win vtms">
  <div class="titlebar d-flex align-items-center"><i class="dot"></i><i class="dot"></i><i class="dot"></i></div>
  <svg class="deco" width="1658" height="1300" id="deco">
    <circle cx="3" cy="0" r="205" fill="#1e4a47"/><circle cx="3" cy="0" r="102" fill="#47545f"/>
    <circle cx="1193" cy="682" r="205" fill="#1d365e"/><circle cx="1193" cy="682" r="103" fill="#47545f"/>
    <svg width="1658" height="1215"><circle cx="1658" cy="1215" r="206" fill="#47545f"/><circle cx="1658" cy="1215" r="103" fill="#1d365e"/></svg>
  </svg>
  <div class="d-flex position-relative">
    <div class="lft">
      <div class="prev">
        <div class="titlebar d-flex align-items-center"><i class="dot"></i><i class="dot"></i><i class="dot"></i></div>
        <div class="d-flex">
          <nav class="side" data-icons="menu pie case copy shield thumb people gear" data-on="pie" id="mini"></nav>
          <div>
            <div class="hd d-flex align-items-center fw-5"><span data-w="247">Dashboard Overview</span></div>
            <div class="low d-flex">
              <div class="cd"><svg width="658" height="368" font-size="16.500" fill="#555">
                <text x="24" y="36" font-size="19" font-weight="600" fill="#222" textLength="171">Insurance Quotation</text>
                <rect x="478" y="16" width="155" height="40" rx="4" fill="#fff" stroke="#e2e2e2" stroke-width="1.500"/><text x="492" y="42.500" textLength="78">Up To Date</text><path d="M602 33l5 6 5-6" fill="none" stroke="#333" stroke-width="2.200"/>
                <rect x="24" y="57" width="21" height="21" fill="#febe46"/><text x="60" y="74" fill="#777" textLength="32">New</text><rect x="118" y="57" width="21" height="21" fill="#4a89e6"/><text x="155" y="74" fill="#777" textLength="93">Request sent</text>
                <rect x="24" y="167" width="346" height="73" fill="#febe46"/><rect x="24" y="251" width="492" height="73" fill="#4a89e6"/>
                <g font-size="12" font-weight="600" fill="#333"><text x="388" y="208" textLength="13">14</text><text x="527" y="289" textLength="13">16</text></g></svg></div>
              <div class="cd"><svg width="300" height="368" font-size="16.500" fill="#777">
                <text x="24" y="36" font-size="19" font-weight="600" fill="#222" textLength="141">Floor Application</text>
                <rect x="24" y="57" width="21" height="21" fill="#febe46"/><text x="61" y="74" textLength="34">Total</text><rect x="122" y="57" width="21" height="21" fill="#4a89e6"/><text x="160" y="74" textLength="40">Value</text>
                <rect x="24" y="236" width="49" height="65" fill="#febe46"/><rect x="94" y="200" width="49" height="101" fill="#4a89e6"/><rect x="183" y="258" width="49" height="43" fill="#febe46"/>
                <g font-size="12.500" font-weight="600" fill="#333"><text x="36" y="217" textLength="22">247</text><text x="86" y="189" textLength="57">1,295,764</text><text x="200" y="241" textLength="18">112</text><text x="70" y="334" textLength="27" font-weight="500">New</text><text x="208" y="334" font-weight="500">Submitted</text></g></svg></div>
            </div>
          </div>
        </div>
      </div>
      <svg class="chart" viewBox="0 0 1272 509">
        <g stroke="#d2d2d2" stroke-width="2" stroke-dasharray="4 4"><path d="M25 0V426M263 0V426M500 0V426M738 0V426M976 0V426M1213 0V426M0 142H1272M0 284H1272M0 426H1272"/></g>
        <g fill="#febe46"><path d="M137 348h88v78h-88zM413 373h88v53h-88zM690 395h85v31h-85zM964 395h85v31h-85z"/></g>
        <g fill="#4a89e6"><path d="M225 303h88v123h-88zM501 193h89v233h-89zM775 327h89v99h-89zM1049 327h89v99h-89z"/></g>
        <g font-size="20.500" font-weight="600" fill="#222"><text x="166" y="330" textLength="36">247</text><text x="220" y="286" textLength="93">1,295,764</text><text x="447" y="355" textLength="27">112</text><text x="497" y="176" textLength="95">3,295,764</text><text x="722" y="377" textLength="24">79</text><text x="769" y="310" textLength="93">1,595,764</text><text x="987" y="377" textLength="25">83</text><text x="1043" y="310" textLength="93">1,595,764</text></g>
        <g font-size="19" font-weight="500" fill="#555"><text x="198" y="477" textLength="38">New</text><text x="429" y="477" textLength="94">Submitted</text><text x="717" y="477" textLength="87">Approved</text><text x="997" y="477" textLength="78">Rejected</text></g>
      </svg>
      <div class="tag">
        <h2><span data-w="836">Change The Quality</span><span data-w="468">Of Your Life</span></h2>
        <p><span data-w="605">Your one stop vehicle trading</span><span data-w="450">management system</span></p>
        <div class="pips d-flex justify-content-center"><i></i><i></i><i></i></div>
      </div>
      <div class="ver"><span data-w="84">V1.0.0</span><span data-w="361">© Powered by Ucars.SG</span></div>
    </div>
    <div class="rgt d-flex flex-column">
      <div class="frm">
        <svg class="mx-auto" width="420" height="98" viewBox="-1 0 420 98" style="margin-top:217px" role="img" aria-label="VTMS logo"><defs><linearGradient id="vg" gradientUnits="userSpaceOnUse" x1="30" x2="390" y1="0" y2="0"><stop stop-color="#f56b64"/><stop offset=".45" stop-color="#a0607f"/><stop offset="1" stop-color="#2b529e"/></linearGradient></defs>
          <path fill="url(#vg)" d="M1 8q17-13 30 6l23 36-14 23zM46 81L89 14q9-12 25-12h78q-14 8-17 25h-61q-9 0-13 10L74 85q-14 19-23 5zM124 94V48q0-12 12-12h13v58z"/>
          <g fill="none" stroke="url(#vg)" stroke-width="25" stroke-linecap="round" stroke-linejoin="round"><path d="M192.500 83V45a31 31 0 0 1 62 0V83"/><path d="M254.500 45a31 31 0 0 1 62 0V83H380a17.500 17.500 0 0 0 0-35H364a17 17 0 0 1 0-34H388"/></g></svg>
        <div class="slogan mx-auto" data-w="422">VEHICLE TRADING MANAGEMENT SYSTEM</div>
        <div class="intro text-center"><span class="mx-auto" data-w="1000">Sign up to unleash your vehicle trading business</span><span class="mx-auto" data-w="231">to the max.</span></div>
        <div class="form-control"><span data-w="249">UCars PTE LTD</span></div>
        <div class="form-control"><span data-w="217">201688894A</span></div>
        <div class="form-control"><span data-w="236">Jenny Wilson</span></div>
        <div class="form-control"><span data-w="57">+81</span><svg class="ic"><use href="#chev"/></svg><span class="num d-flex align-items-center"><span data-w="207">124-124-124</span></span></div>
        <div class="form-control mb-0"><span data-w="521">jennywilson1234@gmail.com</span></div>
        <div class="cap d-flex align-items-center">
          <div class="ck"><svg width="36" height="36"><use href="#check"/></svg></div>
          <span class="fw-5 rob" data-w="235">I’m not a robot</span>
          <div class="rc ms-auto text-center">
            <svg class="mx-auto" width="81" height="81" viewBox="0 0 81 81"><path fill="#4486f4" d="M6 0H40V34L29 24q-8 8-8 17H0Q0 22 14 9z"/><path fill="#1c3aa9" d="M40 0q20 0 32 15l9-8V41H47L57 30Q51 21 40 21z"/><path fill="#ababab" d="M0 41H35L25 52q6 9 16 8 12 0 17-9L72 67Q60 81 40 81 20 81 10 67L0 76z"/></svg>
            <div class="mx-auto" data-w="122">reCAPTCHA</div><div class="fw-5" data-w="143">Privacy - Terms</div>
          </div>
        </div>
        <div class="d-flex agree"><div class="ck"><svg width="36" height="36"><use href="#check"/></svg></div><div><span data-w="795">I have read and&nbsp; agreed to the <a href="#">terms of use</a>,</span><span data-w="572"><a href="#">privacy notice</a> and <a href="#">offer details</a>.</span></div></div>
        <div class="btn d-flex align-items-center justify-content-center border-0"><span data-w="137">Sign Up</span></div>
        <div class="have d-flex"><span data-w="478">Already Have an Account?</span><span class="lg-in fw-6" data-w="106">Log In</span></div>
      </div>
      <div class="foot mt-auto d-flex align-items-center"><span data-w="324">Security noticeboard</span><span data-w="181">Term of Use</span><span data-w="113">Privacy</span><span data-w="183">Help Center</span></div>
    </div>
  </div>
</section>
</main>
<script src="https://cdn.jsdelivr.net/npm/bootstrap@5.3.0/dist/js/bootstrap.bundle.min.js"></script>
<script>
// icon rails
document.querySelectorAll('[data-icons]').forEach(function (n) {
  n.innerHTML = n.dataset.icons.split(' ').map(function (k, i) {
    return '<div class="' + (k === n.dataset.on ? 'on' : '') + (i ? '' : 'top') + '"><svg class="ic"><use href="#' + k + '"/></svg></div>';
  }).join('');
});
document.getElementById('mini').insertAdjacentHTML('beforeend',
  '<div class="gapline"></div><div class="vers"><span><span data-w="33">V1.0.0</span><span data-w="48">© Ucars</span></span></div>');
// dotted grids behind the preview
(function () {
  var d = document.getElementById('deco'), s = '', r, c;
  for (r = 0; r < 6; r++) for (c = 0; c < 6; c++) s += '<circle cx="' + (1285.5 + c * 57.2) + '" cy="' + (130 + r * 63.5) + '" r="8" fill="#1f5349"/>';
  for (r = 0; r < 6; r++) for (c = 0; c < 2; c++) s += '<circle cx="' + (109 + c * 58.500) + '" cy="' + (770.5 + r * 57) + '" r="8" fill="#1d3f80"/>';
  d.insertAdjacentHTML('beforeend', s);
})();
// track each label out to its typeset width
document.querySelectorAll('[data-w]').forEach(function (e) {
  e.style.letterSpacing = '0';
  e.style.letterSpacing = ((e.dataset.w - e.offsetWidth) / e.textContent.length).toFixed(3) + 'px';
});
</script>
</body>
</html>
